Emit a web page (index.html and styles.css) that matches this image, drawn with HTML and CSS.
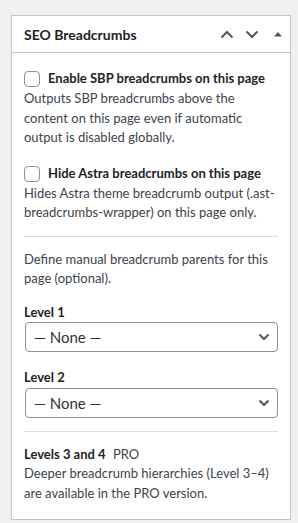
FILE: index.html
```html
<!DOCTYPE html>
<html lang="en">
    <head>
        <meta charset="UTF-8">
        <meta name="viewport" content="width=device-width, initial-scale=1.0">
        <title>SEO Breadcrumbs</title>
        <link rel="stylesheet" href="styles.css">
    </head>
    <body>

        <!-- kotak meta SEO Breadcrumbs -->
        <div class="postbox">
            <div class="postbox-header">
                <h2>SEO Breadcrumbs</h2>
                <div class="handle-actions">
                    <svg width="14" height="9" viewBox="0 0 14 9"><path d="M1.5 7.5 L7 2 L12.5 7.5" fill="none" stroke="#50575e" stroke-width="2"/></svg>
                    <svg width="14" height="9" viewBox="0 0 14 9"><path d="M1.5 1.5 L7 7 L12.5 1.5" fill="none" stroke="#50575e" stroke-width="2"/></svg>
                    <svg width="10" height="6" viewBox="0 0 10 6"><path d="M1 5.5 L5 1 L9 5.5 Z" fill="#50575e"/></svg>
                </div>
            </div>

            <div class="inside">
                <div class="option">
                    <label><input type="checkbox"> Enable SBP breadcrumbs on this page</label>
                    <p>Outputs SBP breadcrumbs above the content on this page even if automatic output is disabled globally.</p>
                </div>

                <div class="option">
                    <label><input type="checkbox"> Hide Astra breadcrumbs on this page</label>
                    <p>Hides Astra theme breadcrumb output (.ast-breadcrumbs-wrapper) on this page only.</p>
                </div>

                <hr class="sep-top">

                <p class="intro">Define manual breadcrumb parents for this page (optional).</p>

                <div class="level">
                    <span class="level-title">Level 1</span>
                    <div class="select-wrap">
                        <select>
                            <option>— None —</option>
                        </select>
                        <svg width="12" height="8" viewBox="0 0 12 8"><path d="M1.5 1.5 L6 6 L10.5 1.5" fill="none" stroke="#50575e" stroke-width="2"/></svg>
                    </div>
                </div>

                <div class="level">
                    <span class="level-title">Level 2</span>
                    <div class="select-wrap">
                        <select>
                            <option>— None —</option>
                        </select>
                        <svg width="12" height="8" viewBox="0 0 12 8"><path d="M1.5 1.5 L6 6 L10.5 1.5" fill="none" stroke="#50575e" stroke-width="2"/></svg>
                    </div>
                </div>

                <hr class="sep-bottom">

                <div class="pro">
                    <p><strong>Levels 3 and 4</strong> <span class="badge">PRO</span></p>
                    <p>Deeper breadcrumb hierarchies (Level 3–4) are available in the PRO version.</p>
                </div>
            </div>
        </div>

    </body>
</html>
```

FILE: styles.css
```css
body {
    font-family: 'Lato', 'Open Sans', sans-serif;
    font-size: 13px;
    line-height: 1.5;
    color: #3c434a;
    background-color: #f0f0f1;
    margin: 0;
    padding: 15px 7px 0 11px;
}

.postbox {
    width: 278px;
    background-color: #fff;
    border: 1px solid #c3c4c7;
    box-shadow: 0 1px 1px rgba(0, 0, 0, 0.04);
}

.postbox-header {
    height: 36px;
    display: flex;
    align-items: center;
    justify-content: space-between;
    border-bottom: 1px solid #c3c4c7;
    padding: 0 7px 0 12px;
}

.postbox-header h2 {
    margin: 0;
    font-size: 14px;
    font-weight: 700;
    color: #1d2327;
}

.handle-actions {
    display: flex;
    align-items: center;
    gap: 11px;
}

.handle-actions svg:last-child {
    margin-left: 3px;
}

.inside {
    padding: 16px 12px 16px;
}

.option label {
    display: flex;
    align-items: center;
    gap: 8px;
    font-weight: 700;
    color: #1d2327;
    height: 20px;
    white-space: nowrap;
}

.option input[type="checkbox"] {
    appearance: none;
    flex: none;
    width: 16px;
    height: 16px;
    margin: 0;
    border: 1px solid #8c8f94;
    border-radius: 4px;
    background-color: #fff;
}

.option p {
    margin: 0;
}

.option + .option {
    margin-top: 16px;
}

hr {
    border: 0;
    border-top: 1px solid #dcdcde;
}

hr.sep-top {
    margin: 13px 0 13px;
}

hr.sep-bottom {
    margin: 13px 0 13px;
}

p {
    margin: 0;
}

.intro {
    margin-bottom: 14px;
}

.level + .level {
    margin-top: 16px;
}

.level-title {
    display: block;
    font-weight: 700;
    color: #1d2327;
}

.select-wrap {
    position: relative;
    margin-left: 1px;
}

.select-wrap select {
    appearance: none;
    width: 100%;
    height: 30px;
    padding: 0 24px 0 8px;
    font-family: inherit;
    font-size: 15px;
    color: #2c3338;
    background-color: #fff;
    border: 1px solid #8c8f94;
    border-radius: 4px;
}

.select-wrap svg {
    position: absolute;
    right: 8px;
    top: 11px;
}

.pro strong {
    font-weight: 700;
    color: #1d2327;
}

.badge {
    margin-left: 4px;
}
```
